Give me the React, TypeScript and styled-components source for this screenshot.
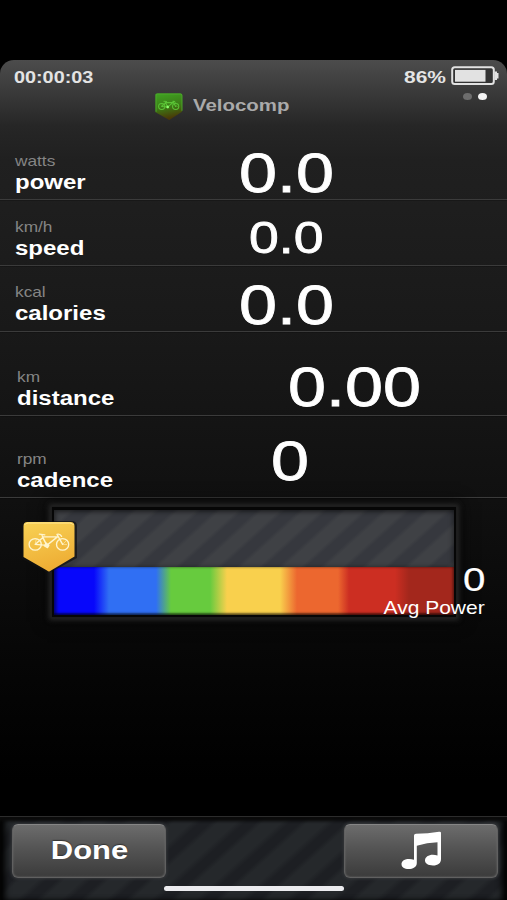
import React from "react";
import styled, { createGlobalStyle } from "styled-components";

const GlobalStyle = createGlobalStyle`
  * { box-sizing: border-box; }
  body { margin: 0; background: #000; }
`;

const Page = styled.div`
  width: 507px;
  height: 900px;
  padding-top: 60px;
  background: #000;
  font-family: "Liberation Sans", Arial, sans-serif;
  color: #fff;
  overflow: hidden;
`;

const Screen = styled.main`
  height: 840px;
  display: flex;
  flex-direction: column;
  border-radius: 14px 14px 0 0;
  overflow: hidden;
  background: linear-gradient(
    180deg,
    #4c4c4c 0,
    #3b3b3b 30px,
    #262626 66px,
    #202020 100px,
    #191919 270px,
    #101010 440px,
    #050505 620px,
    #000 720px
  );
`;

const Wide = styled.span<{ $size: number; $line: number; $scale?: number; $bold?: boolean; $color?: string; $right?: boolean; $stroke?: number }>`
  display: block;
  width: max-content;
  white-space: nowrap;
  font-size: ${(p) => p.$size}px;
  line-height: ${(p) => p.$line}px;
  font-weight: ${(p) => (p.$bold ? 700 : 400)};
  color: ${(p) => p.$color ?? "#fff"};
  -webkit-text-stroke: ${(p) => p.$stroke ?? 0}px currentColor;
  transform: scaleX(${(p) => p.$scale ?? 1.2});
  transform-origin: ${(p) => (p.$right ? "right" : "left")} center;
`;

const Header = styled.header`
  height: 74px;
  flex: none;
`;

const StatusBar = styled.div`
  display: flex;
  justify-content: space-between;
  height: 31px;
  padding: 6px 8px 0 14px;
`;

const BatteryGroup = styled.div`
  display: grid;
  grid-template-columns: 47px 48px;
  height: 22px;
`;

const BrandRow = styled.div`
  display: grid;
  grid-template-columns: 29px 1fr 26px;
  column-gap: 10px;
  padding: 2px 18px 0 154px;
`;

const Dots = styled.div`
  display: flex;
  gap: 6px;
  height: 7px;
`;

const Dot = styled.i<{ $on?: boolean }>`
  width: 9px;
  height: 7px;
  border-radius: 50%;
  background: ${(p) => (p.$on ? "#f4f4f4" : "#6d6d6d")};
`;

const Row = styled.section<{ $height: number }>`
  display: flex;
  height: ${(p) => p.$height}px;
  flex: none;
  border-bottom: 1px solid #3b3b3b;
  box-shadow: 0 1px 0 rgba(0, 0, 0, 0.2);
`;

const Labels = styled.div<{ $left: number; $top: number; $width: number }>`
  width: ${(p) => p.$width}px;
  padding: ${(p) => p.$top}px 0 0 ${(p) => p.$left}px;
`;

const Value = styled.div<{ $top: number }>`
  padding-top: ${(p) => p.$top}px;
`;

const GaugeArea = styled.section`
  height: 318px;
  flex: none;
  position: relative;
  padding: 9px 0 0 52px;
`;

const Gauge = styled.div`
  width: 404px;
  height: 110px;
  border: 2px solid #060606;
  border-top-width: 3px;
  box-shadow: 0 0 0 1px #1d1d1d, 0 0 5px 3px #282828, 0 0 14px 5px #080808;
`;

const Track = styled.div`
  height: 57px;
  background: repeating-linear-gradient(138deg, #3f4145 0 11px, #36383e 15px 24px, #3f4145 28px);
  box-shadow: inset 2px 2px 4px rgba(0, 0, 0, 0.4), inset -2px 0 4px rgba(0, 0, 0, 0.3);
`;

const Zones = styled.div`
  height: 48px;
  background: linear-gradient(
    90deg,
    #0707fb 0, #0707fb 40px, #306ff3 55px, #306ff3 102px,
    #67cb3e 117px, #67cb3e 156px, #f9d04d 173px, #f9d04d 226px,
    #ec672f 243px, #ec672f 284px, #cc2e22 295px, #cc2e22 341px,
    #a3271c 355px, #a3271c 100%
  );
  box-shadow: inset 3px 0 3px rgba(0, 0, 0, 0.4), inset 0 -2px 2px rgba(0, 0, 0, 0.5), inset -2px 0 2px rgba(0, 0, 0, 0.25);
`;

const Marker = styled.div`
  position: absolute;
  left: 20px;
  top: 20px;
`;

const Average = styled.div`
  position: absolute;
  right: 22px;
  top: 63px;
  display: flex;
  flex-direction: column;
  align-items: flex-end;
`;

const Toolbar = styled.footer`
  height: 84px;
  flex: none;
  position: relative;
  display: flex;
  justify-content: space-between;
  align-items: flex-start;
  padding: 7px 9px 0 12px;
  border-top: 1px solid #2c2c2c;
  background: repeating-linear-gradient(138deg, #25282b 0 12px, #1d1f23 18px 25px, #25282b 30px);
  box-shadow: inset 0 4px 3px #0b0b0b, inset 7px 0 6px -2px #000, inset -7px 0 6px -2px #000;
`;

const Button = styled.button`
  width: 154px;
  height: 54px;
  padding: 0 0 3px;
  display: flex;
  justify-content: center;
  align-items: center;
  border: 1px solid #606060;
  border-top-color: #858585;
  border-radius: 6px;
  background: linear-gradient(#6c6c6c, #545454 45%, #3b3b3b);
  box-shadow: 0 0 3px 1px #35373a, inset 0 0 2px #707070;
  font-family: inherit;
`;

const DoneText = styled.span`
  font-size: 26px;
  font-weight: 700;
  line-height: 50px;
  transform: scaleX(1.19);
  color: #fff;
  text-shadow: 0 -1px 1px #333;
`;

const HomeBar = styled.i`
  position: absolute;
  left: 164px;
  top: 69px;
  width: 180px;
  height: 5px;
  border-radius: 3px;
  background: #ececef;
`;

const Bike = ({ color, width }: { color: string; width: number }) => (
  <g fill="none" stroke={color} strokeWidth={width} strokeLinecap="round" strokeLinejoin="round">
    <ellipse cx="15.2" cy="26.4" rx="6.1" ry="5.8" />
    <ellipse cx="42.6" cy="26.4" rx="6.1" ry="5.8" />
    <path d="M15.2 26.4 22.8 19.6 26.8 27.4 37.4 18.9H22.8M26.8 27.4l-5-10.4M19.4 16.2l5.4.6M26.8 27.4l-11.6-1M42.6 26.4 37 16.4q3-1 4.600 2" />
    <path d="m24.5 28 1.6-3 2.8 2.4-1.4 2.2z" fill={color} />
    <path d="m15.2 26.4 1-5M42.6 26.4l4-4M42.6 26.4h4" strokeWidth={width * 0.4} />
  </g>
);

const Battery = () => (
  <svg width="48" height="22" viewBox="0 0 48 22">
    <rect x="1.2" y="1.2" width="41.6" height="16.8" rx="2.5" fill="#333" stroke="#e2e2e2" strokeWidth="2" />
    <rect x="4" y="3.9" width="30.5" height="11.8" fill="#e2e2e2" />
    <path d="M43.5 5.5H46V7h1.500v5.5H46V14h-2.5z" fill="#e2e2e2" />
  </svg>
);

const BrandIcon = () => (
  <svg width="29" height="28" viewBox="0 0 57 55">
    <defs>
      <linearGradient id="green" x2="0.2" y2="1">
        <stop stopColor="#3fa422" />
        <stop offset="0.55" stopColor="#3c7d17" />
        <stop offset="1" stopColor="#4a3907" />
      </linearGradient>
    </defs>
    <path d="M3 3Q3 1 6 1h46q3 0 3 3v33L30 53 3 38z" fill="url(#green)" />
    <path d="M4 37V4q0-2 3-2h45q3 0 3 3v30" fill="none" stroke="#4aa829" strokeWidth="2" />
    <Bike color="#5bc436" width={2} />
    <circle cx="27" cy="27.5" r="2.3" fill="#8dff6d" />
  </svg>
);

const YellowMarker = () => (
  <svg width="58" height="55" viewBox="0 0 58 55">
    <defs>
      <linearGradient id="gold" x2="0.3" y2="1">
        <stop stopColor="#f8d255" />
        <stop offset="1" stopColor="#eeae35" />
      </linearGradient>
    </defs>
    <path d="M2 8q0-5 5-5h44q6 0 6 5v32L31 54h-5L2 41z" fill="#111" opacity="0.7" />
    <path d="M3.5 8q0-4 4-4h43q4 0 4 4v30.5L31 52.5q-2 1.8-4 0L3.5 39z" fill="url(#gold)" />
    <path d="M4.5 7q1-2 4-2h41q3 0 4 2" fill="none" stroke="#ffe895" />
    <Bike color="#fff5ce" width={1.35} />
  </svg>
);

const MusicIcon = () => (
  <svg width="42" height="40" viewBox="0 0 42 40">
    <path d="M14 5.5Q14 4 16 3.800 28 3.800 39 1.800q2-.3 2 1V29c0 4.200-3 6.500-8 6.500s-8-2-8-5.200c0-4.300 6-7 12.500-4.800V12.300q-10.500.3-20.700 3.500V33c0 4.300-4 6-8.200 6S1.500 37.200 1.500 34C1.500 29.700 8 27.600 14 29.800z" fill="#fff" />
  </svg>
);

const metrics = [
  { unit: "watts", name: "power", value: "0.0", height: 66, left: 15, top: 19, width: 239, valueTop: 9, size: 56, scale: 1.22 },
  { unit: "km/h", name: "speed", value: "0.0", height: 66, left: 15, top: 19, width: 249, valueTop: 8, size: 45, scale: 1.19 },
  { unit: "kcal", name: "calories", value: "0.0", height: 66, left: 15, top: 18, width: 239, valueTop: 9, size: 56, scale: 1.22 },
  { unit: "km", name: "distance", value: "0.00", height: 84, left: 17, top: 37, width: 288, valueTop: 25, size: 56, scale: 1.22 },
  { unit: "rpm", name: "cadence", value: "0", height: 82, left: 17, top: 35, width: 271, valueTop: 15, size: 56, scale: 1.22 },
];

export default function App() {
  return (
    <Page>
      <GlobalStyle />
      <Screen>
        <Header>
          <StatusBar>
            <Wide $size={16.5} $line={22} $bold $scale={1.2} $color="#e4e4e4">00:00:03</Wide>
            <BatteryGroup>
              <Wide $size={16.5} $line={22} $bold $scale={1.27} $color="#e4e4e4">86%</Wide>
              <Battery />
            </BatteryGroup>
          </StatusBar>
          <BrandRow>
            <BrandIcon />
            <Wide $size={17} $line={25} $bold $scale={1.2} $color="#aaa">Velocomp</Wide>
            <Dots><Dot /><Dot $on /></Dots>
          </BrandRow>
        </Header>
        {metrics.map((m) => (
          <Row key={m.name} $height={m.height}>
            <Labels $left={m.left} $top={m.top} $width={m.width}>
              <Wide $size={14.4} $line={16} $color="#858585">{m.unit}</Wide>
              <Wide $size={20} $line={26} $bold $scale={1.2}>{m.name}</Wide>
            </Labels>
            <Value $top={m.valueTop}>
              <Wide $size={m.size} $line={60} $scale={m.scale} $stroke={0.8}>{m.value}</Wide>
            </Value>
          </Row>
        ))}
        <GaugeArea>
          <Gauge>
            <Track />
            <Zones />
          </Gauge>
          <Marker><YellowMarker /></Marker>
          <Average>
            <Wide $size={33} $line={38} $scale={1.22} $right $stroke={0.2}>0</Wide>
            <Wide $size={17.8} $line={19} $scale={1.18} $right>Avg Power</Wide>
          </Average>
        </GaugeArea>
        <Toolbar>
          <Button><DoneText>Done</DoneText></Button>
          <Button aria-label="Music"><MusicIcon /></Button>
          <HomeBar />
        </Toolbar>
      </Screen>
    </Page>
  );
}
